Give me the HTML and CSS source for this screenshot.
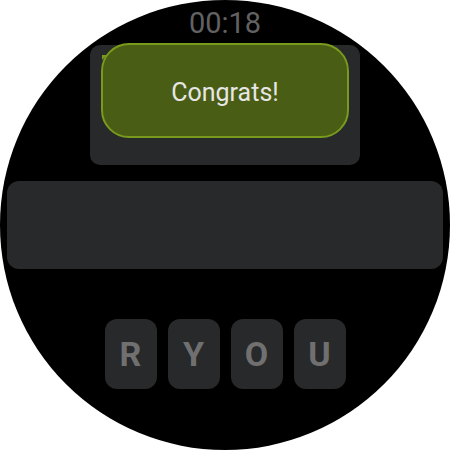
FILE: index.html
```html
<!DOCTYPE html>
<html>
<head>
<meta charset="utf-8">
<link rel="stylesheet" href="styles.css">
</head>
<body>
<div class="watch">
  <div class="time">00:18</div>
  <div class="card">
    <div class="toast">Congrats!</div>
  </div>
  <div class="bar"></div>
  <div class="tiles">
    <div class="tile">R</div>
    <div class="tile">Y</div>
    <div class="tile">O</div>
    <div class="tile">U</div>
  </div>
</div>
</body>
</html>
```
FILE: styles.css
```css
html, body {
  margin: 0;
  padding: 0;
  background: #fff;
}
.watch {
  width: 450px;
  height: 450px;
  border-radius: 50%;
  background: #000;
  overflow: hidden;
  display: flex;
  flex-direction: column;
  align-items: center;
  font-family: Roboto, "Liberation Sans", sans-serif;
}
.time {
  margin-top: 7px;
  height: 32px;
  line-height: 32px;
  font-size: 29px;
  color: #626262;
}
.card {
  position: relative;
  margin-top: 6px;
  width: 270px;
  height: 120px;
  border-radius: 10px;
  background: #28292b;
}
.toast {
  position: absolute;
  left: 11px;
  top: -2px;
  width: 248px;
  height: 95px;
  box-sizing: border-box;
  padding-top: 3px;
  border: 2px solid #799a1c;
  border-radius: 28px;
  background: #4a5d14;
  color: #e6e6e6;
  font-size: 25px;
  display: flex;
  align-items: center;
  justify-content: center;
}
.toast::before {
  content: "";
  position: absolute;
  left: -1px;
  top: 10px;
  width: 0;
  height: 0;
  border-top: 5px solid #799a1c;
  border-right: 5px solid transparent;
}
.bar {
  margin-top: 16px;
  width: 436px;
  height: 88px;
  border-radius: 12px;
  background: #28292b;
}
.tiles {
  margin-top: 50px;
  display: flex;
  gap: 11px;
}
.tile {
  width: 52px;
  height: 70px;
  border-radius: 12px;
  background: #28292b;
  color: #707070;
  font-weight: bold;
  font-size: 34px;
  display: flex;
  align-items: center;
  justify-content: center;
}
```
